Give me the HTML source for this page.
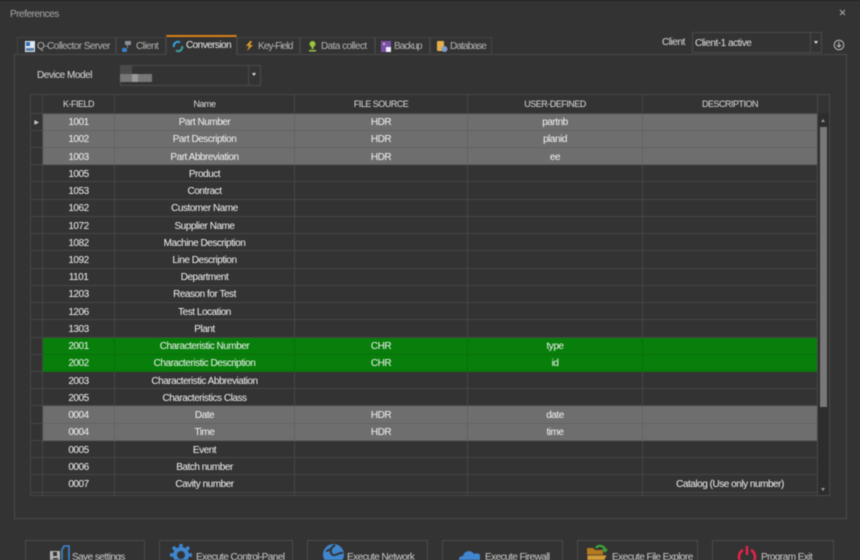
<!DOCTYPE html>
<html><head><meta charset="utf-8">
<style>
html,body{margin:0;padding:0;background:#333;}
#p{position:relative;width:860px;height:560px;overflow:hidden;background:#333;font-family:"Liberation Sans",sans-serif;font-size:10px;letter-spacing:-.47px;color:#f4f4f4;filter:blur(.45px);}
.a{position:absolute;white-space:nowrap;}
.b{position:absolute;box-sizing:border-box;border:1px solid #4a4a4a;}
.tab{position:absolute;top:37px;height:18px;box-sizing:border-box;border:1px solid #444;border-bottom:0;line-height:17px;color:#b5b5b5;letter-spacing:-.55px;}
.tab span{position:absolute;top:0;}
.tab svg{position:absolute;top:2px;}
table{position:absolute;left:30px;top:94px;border-collapse:collapse;table-layout:fixed;width:787px;}
td,th{border:1px solid #464646;padding:3px 0 0;height:17.24px;line-height:12px;text-align:center;font-weight:normal;overflow:hidden;white-space:nowrap;box-sizing:border-box;}
th{height:18.5px;padding-top:1px;line-height:14px;color:#ddd;font-size:9px;letter-spacing:-.5px;}
tr.g td{background:#6e6e6e;border-color:#626262;}
tr.n td{background:#087f0b;border-color:#0a6e0c;}
td.r,tr.g td.r,tr.n td.r{background:#333;border-color:#464646;}
tr.f td{height:3px;padding:0;line-height:0;font-size:0;}
.btn{position:absolute;top:540px;height:30px;box-sizing:border-box;border:1px solid #4a4a4a;color:#ccc;letter-spacing:-.55px;}
.btn span{position:absolute;top:11px;}
.btn svg{position:absolute;}
</style></head><body>
<div id="p">
<div class="a" style="left:0;top:0;width:860px;height:1px;background:#222;"></div>
<div class="a" style="left:10px;top:9px;color:#aaa;">Preferences</div>
<svg class="a" style="left:839px;top:9px" width="7" height="7" viewBox="0 0 7 7"><path d="M1 1L6 6M6 1L1 6" stroke="#aaa" stroke-width="1"/></svg>

<div class="b" style="left:14px;top:54px;width:833px;height:465px;"></div>

<div class="tab" style="left:17px;width:99px;"><svg style="left:6px" width="12" height="13" viewBox="0 0 12 13"><rect x="1" y="1" width="10" height="11" fill="#dfe8f2"/><rect x="2" y="2" width="4" height="4" fill="#2f6fb5"/><rect x="2" y="8" width="8" height="3" fill="#5a7fa8"/></svg><span style="left:19px">Q-Collector Server</span></div>
<div class="tab" style="left:116px;width:50px;"><svg style="left:4px" width="12" height="13" viewBox="0 0 12 13"><rect x="4" y="1" width="6" height="4" fill="#8a9099"/><rect x="6" y="5" width="1" height="3" fill="#888"/><rect x="1" y="8" width="5" height="4" rx="1" fill="#3a80c8"/></svg><span style="left:19px">Client</span></div>
<div class="tab" style="left:166px;top:35px;width:71px;height:20px;border-top:2px solid #d97f14;background:#333;color:#f0f0f0;line-height:18px;"><svg style="left:5px;top:3px" width="12" height="13" viewBox="0 0 12 13"><path d="M2 7A4 4 0 0 1 8 2.500" fill="none" stroke="#35a3d8" stroke-width="2"/><path d="M10 6A4 4 0 0 1 4 10.500" fill="none" stroke="#3fa0a0" stroke-width="2"/></svg><span style="left:19px">Conversion</span></div>
<div class="tab" style="left:237px;width:63px;"><svg style="left:5px" width="12" height="13" viewBox="0 0 12 13"><path d="M7 1L3 6H6L4 11L10 5H7L9 1Z" fill="#d99a2b"/></svg><span style="left:20px;letter-spacing:-.85px">Key-Field</span></div>
<div class="tab" style="left:300px;width:75px;"><svg style="left:6px" width="11" height="13" viewBox="0 0 11 13"><circle cx="5.500" cy="4" r="3" fill="#9bc53d"/><rect x="4.500" y="6" width="2" height="3" fill="#9bc53d"/><rect x="2" y="10" width="7" height="1.500" fill="#9bc53d"/></svg><span style="left:20px">Data collect</span></div>
<div class="tab" style="left:375px;width:55px;"><svg style="left:4px" width="12" height="13" viewBox="0 0 12 13"><rect x="1" y="1" width="10" height="11" fill="#7a4fa8"/><rect x="6" y="7" width="5" height="5" fill="#eef"/><rect x="3" y="3" width="2" height="2" fill="#cbb"/></svg><span style="left:18px;letter-spacing:-.95px">Backup</span></div>
<div class="tab" style="left:430px;width:62px;"><svg style="left:5px" width="12" height="13" viewBox="0 0 12 13"><rect x="1" y="1" width="7" height="10" rx="1" fill="#e3b04b"/><circle cx="8.500" cy="9" r="3" fill="#7f9ccb"/></svg><span style="left:19px;letter-spacing:-.85px">Database</span></div>

<div class="a" style="left:662px;top:37px;color:#ddd;">Client</div>
<div class="b" style="left:692px;top:32px;width:130px;height:21px;"></div>
<div class="a" style="left:810px;top:33px;width:1px;height:19px;background:#4a4a4a;"></div>
<div class="a" style="left:695px;top:38px;color:#e0e0e0;">Client-1 active</div>
<div class="a" style="left:814px;top:41px;border:2.500px solid transparent;border-top:3px solid #ddd;border-bottom:0;"></div>
<svg class="a" style="left:833px;top:39px" width="12" height="12" viewBox="0 0 12 12"><circle cx="6" cy="6" r="4.800" fill="none" stroke="#bbb" stroke-width="1"/><path d="M6 3V7M4 6L6 8L8 6" fill="none" stroke="#bbb" stroke-width="1"/></svg>

<div class="a" style="left:37px;top:70px;color:#ddd;">Device Model</div>
<div class="b" style="left:120px;top:65px;width:141px;height:21px;"></div>
<div class="a" style="left:248px;top:66px;width:1px;height:19px;background:#4a4a4a;"></div>
<div class="a" style="left:252px;top:73px;border:2.500px solid transparent;border-top:3px solid #ddd;border-bottom:0;"></div>
<div class="a" style="left:120px;top:65px;width:12px;height:9px;background:#4a4a4a;"></div>
<div class="a" style="left:120px;top:74px;width:32px;height:8px;background:#777;"></div>
<div class="a" style="left:132px;top:74px;width:6px;height:8px;background:#999;"></div>

<table>
<colgroup><col style="width:12px"><col style="width:72px"><col style="width:180px"><col style="width:173px"><col style="width:175px"><col style="width:175px"></colgroup>
<tr><th></th><th>K-FIELD</th><th>Name</th><th>FILE SOURCE</th><th>USER-DEFINED</th><th>DESCRIPTION</th></tr>
<tr class="g"><td class="r" style="color:#ccc;font-size:6px">&#9654;</td><td>1001</td><td>Part Number</td><td>HDR</td><td>partnb</td><td></td></tr>
<tr class="g"><td class="r"></td><td>1002</td><td>Part Description</td><td>HDR</td><td>planid</td><td></td></tr>
<tr class="g"><td class="r"></td><td>1003</td><td>Part Abbreviation</td><td>HDR</td><td>ee</td><td></td></tr>
<tr><td class="r"></td><td>1005</td><td>Product</td><td></td><td></td><td></td></tr>
<tr><td class="r"></td><td>1053</td><td>Contract</td><td></td><td></td><td></td></tr>
<tr><td class="r"></td><td>1062</td><td>Customer Name</td><td></td><td></td><td></td></tr>
<tr><td class="r"></td><td>1072</td><td>Supplier Name</td><td></td><td></td><td></td></tr>
<tr><td class="r"></td><td>1082</td><td>Machine Description</td><td></td><td></td><td></td></tr>
<tr><td class="r"></td><td>1092</td><td>Line Description</td><td></td><td></td><td></td></tr>
<tr><td class="r"></td><td>1101</td><td>Department</td><td></td><td></td><td></td></tr>
<tr><td class="r"></td><td>1203</td><td>Reason for Test</td><td></td><td></td><td></td></tr>
<tr><td class="r"></td><td>1206</td><td>Test Location</td><td></td><td></td><td></td></tr>
<tr><td class="r"></td><td>1303</td><td>Plant</td><td></td><td></td><td></td></tr>
<tr class="n"><td class="r"></td><td>2001</td><td>Characteristic Number</td><td>CHR</td><td>type</td><td></td></tr>
<tr class="n"><td class="r"></td><td>2002</td><td>Characteristic Description</td><td>CHR</td><td>id</td><td></td></tr>
<tr><td class="r"></td><td>2003</td><td>Characteristic Abbreviation</td><td></td><td></td><td></td></tr>
<tr><td class="r"></td><td>2005</td><td>Characteristics Class</td><td></td><td></td><td></td></tr>
<tr class="g"><td class="r"></td><td>0004</td><td>Date</td><td>HDR</td><td>date</td><td></td></tr>
<tr class="g"><td class="r"></td><td>0004</td><td>Time</td><td>HDR</td><td>time</td><td></td></tr>
<tr><td class="r"></td><td>0005</td><td>Event</td><td></td><td></td><td></td></tr>
<tr><td class="r"></td><td>0006</td><td>Batch number</td><td></td><td></td><td></td></tr>
<tr><td class="r"></td><td>0007</td><td>Cavity number</td><td></td><td></td><td>Catalog (Use only number)</td></tr>
<tr class="f"><td></td><td></td><td></td><td></td><td></td><td></td></tr>
</table>

<div class="b" style="left:817px;top:94px;width:13px;height:402px;border-color:#484848;"></div>
<div class="a" style="left:818px;top:113px;width:11px;height:382px;background:#2d2d2d;"></div>
<div class="a" style="left:820px;top:127px;width:7px;height:280px;background:#787878;"></div>
<div class="a" style="left:821px;top:119px;border:2px solid transparent;border-bottom:3px solid #999;border-top:0;"></div>
<div class="a" style="left:821px;top:488px;border:2px solid transparent;border-top:3px solid #999;border-bottom:0;"></div>

<div class="btn" style="left:25px;width:120px;"><svg style="left:23px;top:4px" width="22" height="18" viewBox="0 0 22 18"><path d="M1 6H11V18H1Z" fill="#b5b5b5"/><rect x="4" y="7" width="4" height="4" fill="#333"/><rect x="4" y="13" width="5" height="1.500" fill="#333"/><path d="M13 5L15 1H20V16H13Z" fill="none" stroke="#3f86cf" stroke-width="1.600"/></svg><span style="left:46px">Save settings</span></div>
<div class="btn" style="left:159px;width:134px;"><svg style="left:10px;top:3px" width="22" height="22" viewBox="0 0 22 22"><circle cx="11" cy="11" r="6" fill="none" stroke="#3f86cf" stroke-width="4"/><path d="M11 0V5M11 17V22M0 11H5M17 11H22M3 3L6 6M16 16L19 19M19 3L16 6M6 16L3 19" stroke="#3f86cf" stroke-width="3.500"/></svg><span style="left:36px">Execute Control-Panel</span></div>
<div class="btn" style="left:307px;width:121px;"><svg style="left:15px;top:3px" width="21" height="21" viewBox="0 0 21 21"><circle cx="10.500" cy="10.500" r="10.500" fill="#3f86cf"/><path d="M3 7C7 7 9 3 12 1C8 3 6 9 10 11C13 12 16 8 20 9" fill="none" stroke="#333" stroke-width="2"/></svg><span style="left:39px">Execute Network</span></div>
<div class="btn" style="left:442px;width:121px;"><svg style="left:16px;top:8px" width="21" height="14" viewBox="0 0 21 14"><path d="M1 14A4 4 0 0 1 4 7A6 6 0 0 1 15 5A5 5 0 0 1 20 14Z" fill="#3f86cf"/></svg><span style="left:42px">Execute Firewall</span></div>
<div class="btn" style="left:577px;width:121px;"><svg style="left:8px;top:3px" width="22" height="18" viewBox="0 0 22 18"><path d="M1 4H7L9 6H17V18H1Z" fill="#b5791f"/><path d="M1 11H21L18 18H1Z" fill="#d39a35" stroke="#333" stroke-width=".8"/><path d="M10 4C12 1 17 1 19 5" fill="none" stroke="#3aa63a" stroke-width="2.200"/><path d="M16 5H22L19 9Z" fill="#3aa63a"/></svg><span style="left:34px">Execute File Explore</span></div>
<div class="btn" style="left:712px;width:122px;"><svg style="left:24px;top:4px" width="20" height="22" viewBox="0 0 20 22"><path d="M6 5A8 8 0 1 0 14 5" fill="none" stroke="#e8224a" stroke-width="2.500"/><path d="M10 1V10" stroke="#e8224a" stroke-width="2.500"/></svg><span style="left:48px">Program Exit</span></div>
</div>
</body></html>
